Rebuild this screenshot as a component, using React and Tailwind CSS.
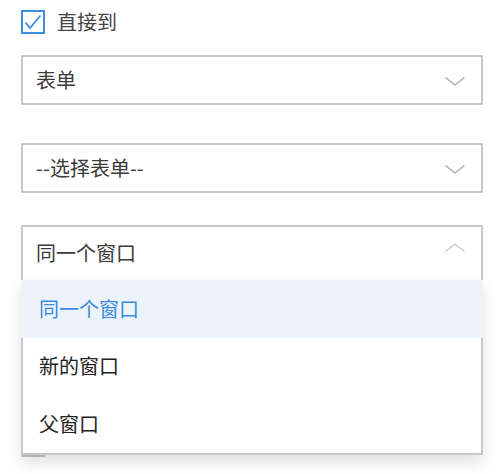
import { useState } from 'react'

const font = { fontFamily: '"Noto Sans CJK SC", "Noto Sans", sans-serif' }

function Chevron({ up, className }) {
  return (
    <svg width="20" height="9" viewBox="0 0 20 9" className={className}>
      <path
        d={up ? 'M0.5 8.5 L10 1 L19.5 8.5' : 'M0.5 0.5 L10 8 L19.5 0.5'}
        fill="none"
        stroke="currentColor"
        strokeWidth="1.1"
      />
    </svg>
  )
}

function SelectBox({ label, className = '' }) {
  return (
    <div className={`flex h-[50px] w-[462px] items-center justify-between border-2 border-[#c7c7cb] bg-white pl-[13px] pr-[16px] ${className}`}>
      <span className="text-[20px] text-[#3a3a3a]">{label}</span>
      <Chevron className="mt-[2px] text-[#a3a3a3]" />
    </div>
  )
}

export default function App() {
  const [checked, setChecked] = useState(true)
  const [target, setTarget] = useState('同一个窗口')
  const options = ['同一个窗口', '新的窗口', '父窗口']

  return (
    <div className="min-h-[474px] bg-white pl-[21px] pt-[10px]" style={font}>
      {/* 直接到 */}
      <label className="flex h-[24px] items-center gap-[12px]" onClick={() => setChecked(!checked)}>
        <span className="flex h-[24px] w-[24px] items-center justify-center border-2 border-[#3d8ee0] bg-white">
          {checked && (
            <svg width="20" height="20" viewBox="0 0 20 20">
              <path d="M2.5 10.5 L7 16 L17.5 3.5" fill="none" stroke="#3d8ee0" strokeWidth="1.8" />
            </svg>
          )}
        </span>
        <span className="text-[20px] text-[#444]">直接到</span>
      </label>

      <SelectBox label="表单" className="mt-[21px]" />
      <SelectBox label="--选择表单--" className="mt-[38px]" />

      {/* 打开方式 */}
      <div className="relative mt-[32px] w-[462px]">
        <div className="flex h-[57px] items-start justify-between border-2 border-[#c7c7cb] bg-white pl-[13px] pr-[16px]">
          <span className="mt-[11px] text-[20px] text-[#3a3a3a]">{target}</span>
          <Chevron up className="mt-[16px] text-[#c4c4c4]" />
        </div>
        <ul className="absolute left-0 top-[55px] z-10 w-[462px] border-x-2 border-b-2 border-[#c7c7cb] bg-white shadow-[0_8px_14px_rgba(0,0,0,0.12)]">
          {options.map((o, i) => (
            <li
              key={o}
              onClick={() => setTarget(o)}
              className={`flex h-[57.5px] items-center pl-[16px] text-[20px] ${
                i === 0 ? '-mx-[2px] bg-[#edf3fb] pl-[18px] text-[#3b8be0]' : 'text-[#222]'
              }`}
            >
              {o}
            </li>
          ))}
        </ul>
        {/* checkbox of the next row, hidden under the open list */}
        <div className="mt-[151px] h-[24px] w-[24px] border-2 border-[#c7c7cb] bg-white" />
      </div>
    </div>
  )
}
